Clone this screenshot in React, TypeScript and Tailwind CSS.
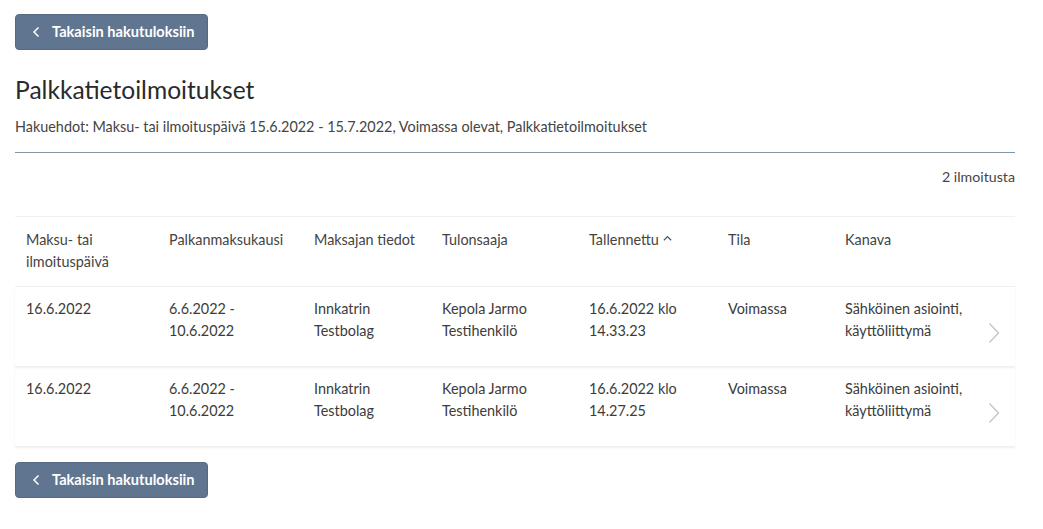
import { ChevronLeft } from "lucide-react";

const rows = [
  {
    date: "16.6.2022",
    period: ["6.6.2022 -", "10.6.2022"],
    payer: ["Innkatrin", "Testbolag"],
    payee: ["Kepola Jarmo", "Testihenkilö"],
    saved: ["16.6.2022 klo", "14.33.23"],
    state: "Voimassa",
    channel: ["Sähköinen asiointi,", "käyttöliittymä"],
  },
  {
    date: "16.6.2022",
    period: ["6.6.2022 -", "10.6.2022"],
    payer: ["Innkatrin", "Testbolag"],
    payee: ["Kepola Jarmo", "Testihenkilö"],
    saved: ["16.6.2022 klo", "14.27.25"],
    state: "Voimassa",
    channel: ["Sähköinen asiointi,", "käyttöliittymä"],
  },
];

const cols = "grid grid-cols-[143px_145px_128px_147px_139px_117px_1fr_36px]";

function BackButton() {
  return (
    <button className="flex items-center gap-2 h-9 pl-[12px] pr-[12px] rounded bg-[#607690] text-white text-[14.6px] font-bold border border-[#55697f]">
      <ChevronLeft className="w-4 h-4" strokeWidth={2.5} />
      <span>Takaisin hakutuloksiin</span>
    </button>
  );
}

function Lines({ items }: { items: string[] }) {
  return (
    <div>
      {items.map((t) => (
        <div key={t}>{t}</div>
      ))}
    </div>
  );
}

export default function App() {
  return (
    <div className="min-h-screen bg-white px-[15px] pt-[14px] text-[#3c3c3c] font-['Lato',sans-serif] w-[1030px]">
      <BackButton />

      <h1 className="text-[24.6px] leading-8 mt-[24px] text-[#2a2a2a]">Palkkatietoilmoitukset</h1>
      <p className="text-[14.4px] leading-5 mt-[11px] text-[#444]">
        Hakuehdot: Maksu- tai ilmoituspäivä 15.6.2022 - 15.7.2022, Voimassa olevat, Palkkatietoilmoitukset
      </p>
      <div className="border-t border-[#8395a8] mt-[15px]" />

      <div className="text-right text-[14.2px] leading-5 mt-[14px] text-[#444]">2 ilmoitusta</div>

      <div className="mt-[29px] text-[14.4px] leading-[22px]">
        <div className={`${cols} border-t border-[#f0f0f0] pt-[12px] h-[70px] text-[#444]`}>
          <div className="pl-[11px]">
            <div>Maksu- tai</div>
            <div>ilmoituspäivä</div>
          </div>
          <div className="pl-[11px]">Palkanmaksukausi</div>
          <div className="pl-[11px]">Maksajan tiedot</div>
          <div className="pl-[11px]">Tulonsaaja</div>
          <div className="pl-[11px] flex items-start gap-1">
            Tallennettu
            <svg viewBox="0 0 10 6" className="w-[9px] h-[6px] mt-[6px]" fill="none" stroke="#555" strokeWidth="1.4">
              <path d="M1 5.5 5 1.5 9 5.5" />
            </svg>
          </div>
          <div className="pl-[11px]">Tila</div>
          <div className="pl-[11px]">Kanava</div>
          <div />
        </div>

        {rows.map((r, i) => (
          <div
            key={i}
            className={`${cols} h-[80px] pt-[11px] border-t border-[#f0f0f0] shadow-[0_2px_2px_rgba(0,0,0,0.07)]`}
          >
            <div className="pl-[11px]">{r.date}</div>
            <div className="pl-[11px]">
              <Lines items={r.period} />
            </div>
            <div className="pl-[11px]">
              <Lines items={r.payer} />
            </div>
            <div className="pl-[11px]">
              <Lines items={r.payee} />
            </div>
            <div className="pl-[11px]">
              <Lines items={r.saved} />
            </div>
            <div className="pl-[11px]">{r.state}</div>
            <div className="pl-[11px]">
              <Lines items={r.channel} />
            </div>
            <div className="flex justify-start pt-[24px]">
              <svg viewBox="0 0 12 22" className="w-[12px] h-[22px] ml-[9px]" fill="none" stroke="#c4c4c4" strokeWidth="1.3">
                <path d="M1.5 1.5 10.5 11 1.5 20.5" />
              </svg>
            </div>
          </div>
        ))}
      </div>

      <div className="mt-[16px]">
        <BackButton />
      </div>
    </div>
  );
}
